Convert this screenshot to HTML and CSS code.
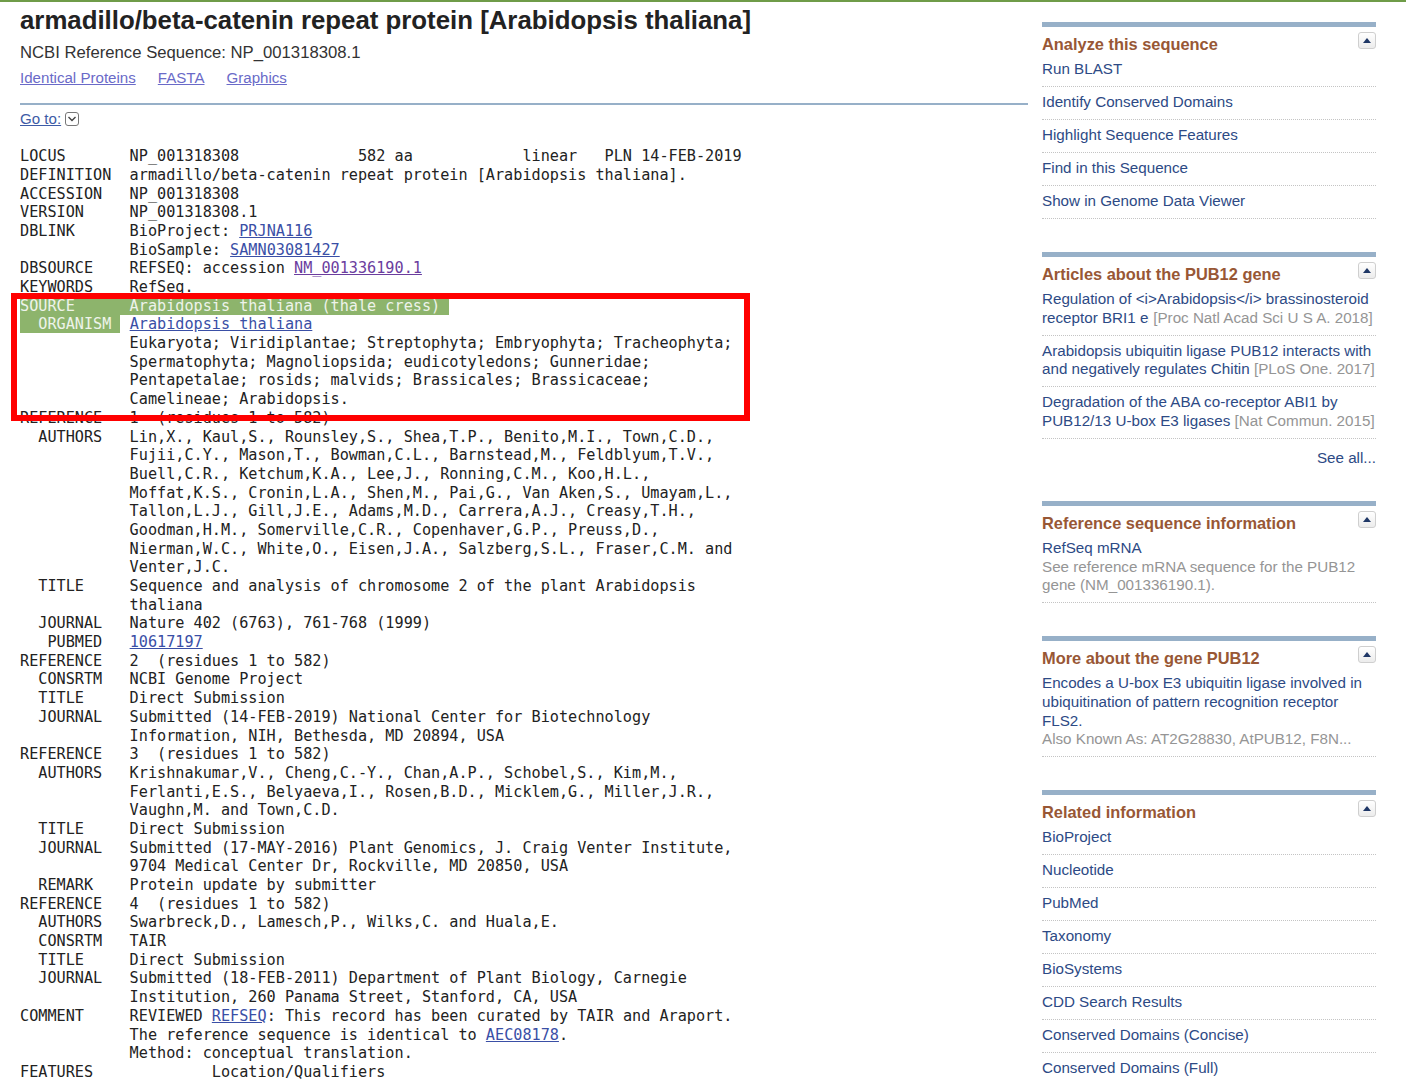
FILE: index.html
```html
<!DOCTYPE html>
<html lang="en">
<head>
<meta charset="utf-8">
<title>armadillo/beta-catenin repeat protein [Arabidopsis thaliana] - Protein - NCBI</title>
<link rel="stylesheet" href="styles.css">
</head>
<body>
<div class="topbar"></div>
<div class="page">
  <main class="content">
    <h1 class="title">armadillo/beta-catenin repeat protein [Arabidopsis thaliana]</h1>
    <p class="subtitle">NCBI Reference Sequence: NP_001318308.1</p>
    <nav class="actions">
      <a href="#">Identical Proteins</a>
      <a href="#">FASTA</a>
      <a href="#">Graphics</a>
    </nav>
    <div class="rule"></div>
    <div class="goto">
      <a href="#">Go to:</a>
      <span class="goto-btn"><svg width="10" height="8" viewBox="0 0 10 8"><path d="M1.5 2 L5 5.5 L8.5 2" fill="none" stroke="#444" stroke-width="1.4"/></svg></span>
    </div>
<pre class="genbank">LOCUS       NP_001318308             582 aa            linear   PLN 14-FEB-2019
DEFINITION  armadillo/beta-catenin repeat protein [Arabidopsis thaliana].
ACCESSION   NP_001318308
VERSION     NP_001318308.1
DBLINK      BioProject: <a href="#">PRJNA116</a>
            BioSample: <a href="#">SAMN03081427</a>
DBSOURCE    REFSEQ: accession <a href="#" class="visited">NM_001336190.1</a>
KEYWORDS    RefSeq.
<span class="hl">SOURCE      Arabidopsis thaliana (thale cress) </span>
<span class="hl">  ORGANISM </span> <a href="#">Arabidopsis thaliana</a>
            Eukaryota; Viridiplantae; Streptophyta; Embryophyta; Tracheophyta;
            Spermatophyta; Magnoliopsida; eudicotyledons; Gunneridae;
            Pentapetalae; rosids; malvids; Brassicales; Brassicaceae;
            Camelineae; Arabidopsis.
REFERENCE   1  (residues 1 to 582)
  AUTHORS   Lin,X., Kaul,S., Rounsley,S., Shea,T.P., Benito,M.I., Town,C.D.,
            Fujii,C.Y., Mason,T., Bowman,C.L., Barnstead,M., Feldblyum,T.V.,
            Buell,C.R., Ketchum,K.A., Lee,J., Ronning,C.M., Koo,H.L.,
            Moffat,K.S., Cronin,L.A., Shen,M., Pai,G., Van Aken,S., Umayam,L.,
            Tallon,L.J., Gill,J.E., Adams,M.D., Carrera,A.J., Creasy,T.H.,
            Goodman,H.M., Somerville,C.R., Copenhaver,G.P., Preuss,D.,
            Nierman,W.C., White,O., Eisen,J.A., Salzberg,S.L., Fraser,C.M. and
            Venter,J.C.
  TITLE     Sequence and analysis of chromosome 2 of the plant Arabidopsis
            thaliana
  JOURNAL   Nature 402 (6763), 761-768 (1999)
   PUBMED   <a href="#">10617197</a>
REFERENCE   2  (residues 1 to 582)
  CONSRTM   NCBI Genome Project
  TITLE     Direct Submission
  JOURNAL   Submitted (14-FEB-2019) National Center for Biotechnology
            Information, NIH, Bethesda, MD 20894, USA
REFERENCE   3  (residues 1 to 582)
  AUTHORS   Krishnakumar,V., Cheng,C.-Y., Chan,A.P., Schobel,S., Kim,M.,
            Ferlanti,E.S., Belyaeva,I., Rosen,B.D., Micklem,G., Miller,J.R.,
            Vaughn,M. and Town,C.D.
  TITLE     Direct Submission
  JOURNAL   Submitted (17-MAY-2016) Plant Genomics, J. Craig Venter Institute,
            9704 Medical Center Dr, Rockville, MD 20850, USA
  REMARK    Protein update by submitter
REFERENCE   4  (residues 1 to 582)
  AUTHORS   Swarbreck,D., Lamesch,P., Wilks,C. and Huala,E.
  CONSRTM   TAIR
  TITLE     Direct Submission
  JOURNAL   Submitted (18-FEB-2011) Department of Plant Biology, Carnegie
            Institution, 260 Panama Street, Stanford, CA, USA
COMMENT     REVIEWED <a href="#">REFSEQ</a>: This record has been curated by TAIR and Araport.
            The reference sequence is identical to <a href="#">AEC08178</a>.
            Method: conceptual translation.
FEATURES             Location/Qualifiers</pre>
  </main>

  <aside class="sidebar">
    <section class="portlet">
      <h3>Analyze this sequence</h3>
      <button class="toggle" type="button" aria-label="collapse"></button>
      <ul>
        <li><a href="#">Run BLAST</a></li>
        <li><a href="#">Identify Conserved Domains</a></li>
        <li><a href="#">Highlight Sequence Features</a></li>
        <li><a href="#">Find in this Sequence</a></li>
        <li><a href="#">Show in Genome Data Viewer</a></li>
      </ul>
    </section>

    <section class="portlet">
      <h3>Articles about the PUB12 gene</h3>
      <button class="toggle" type="button" aria-label="collapse"></button>
      <ul>
        <li><a href="#">Regulation of &lt;i&gt;Arabidopsis&lt;/i&gt; brassinosteroid <span class="clip">receptor BRI1 endocytosis</span></a> <span class="src nowrap">[Proc Natl Acad Sci U S A. 2018]</span></li>
        <li><a href="#">Arabidopsis ubiquitin ligase PUB12 interacts with and negatively regulates Chitin</a> <span class="src nowrap">[PLoS One. 2017]</span></li>
        <li><a href="#">Degradation of the ABA co-receptor ABI1 by PUB12/13 U-box E3 ligases</a> <span class="src nowrap">[Nat Commun. 2015]</span></li>
      </ul>
      <div class="seeall"><a href="#">See all...</a></div>
    </section>

    <section class="portlet">
      <h3>Reference sequence information</h3>
      <button class="toggle" type="button" aria-label="collapse"></button>
      <ul>
        <li><a href="#" class="blk">RefSeq mRNA</a><span class="src">See reference mRNA sequence for the PUB12 gene (NM_001336190.1).</span></li>
      </ul>
    </section>

    <section class="portlet">
      <h3>More about the gene PUB12</h3>
      <button class="toggle" type="button" aria-label="collapse"></button>
      <ul>
        <li><a href="#" class="blk">Encodes a U-box E3 ubiquitin ligase involved in ubiquitination of pattern recognition receptor FLS2.</a><span class="src blk">Also Known As: AT2G28830, AtPUB12, F8N...</span></li>
      </ul>
    </section>

    <section class="portlet">
      <h3>Related information</h3>
      <button class="toggle" type="button" aria-label="collapse"></button>
      <ul>
        <li><a href="#">BioProject</a></li>
        <li><a href="#">Nucleotide</a></li>
        <li><a href="#">PubMed</a></li>
        <li><a href="#">Taxonomy</a></li>
        <li><a href="#">BioSystems</a></li>
        <li><a href="#">CDD Search Results</a></li>
        <li><a href="#">Conserved Domains (Concise)</a></li>
        <li><a href="#">Conserved Domains (Full)</a></li>
      </ul>
    </section>
  </aside>
</div>
<div class="callout" aria-hidden="true"></div>
</body>
</html>
```
FILE: styles.css
```css
html, body {
  margin: 0;
  padding: 0;
  background: #fff;
}
body {
  font-family: "Liberation Sans", Arial, sans-serif;
  color: #222;
  overflow: hidden;
  height: 1079px;
  position: relative;
}
.topbar {
  height: 2px;
  background: #6f9c48;
}
.page {
  display: flex;
  gap: 14px;
  padding-left: 20px;
}
.content {
  width: 1008px;
  flex: none;
}
.title {
  margin: 2px 0 0;
  font-size: 25.8px;
  line-height: 32px;
  font-weight: bold;
  color: #222;
}
.subtitle {
  margin: 7px 0 0;
  font-size: 16.7px;
  line-height: 20px;
  color: #333;
}
.actions {
  margin-top: 5.6px;
  font-size: 15.1px;
  line-height: 18px;
  display: flex;
  gap: 22px;
}
.actions a {
  color: #6a6ac8;
  text-decoration: underline;
}
.rule {
  margin-top: 16px;
  height: 2px;
  background: #97b0c8;
}
.goto {
  margin-top: 5px;
  font-size: 15.1px;
  line-height: 18px;
  display: flex;
  align-items: center;
  gap: 4px;
}
.goto a {
  color: #3d5ba6;
}
.goto-btn {
  display: inline-flex;
  align-items: center;
  justify-content: center;
  width: 12px;
  height: 12px;
  border: 1px solid #777;
  border-radius: 3px;
  margin-top: 1px;
}
.genbank {
  margin: 19.6px 0 0;
  font-family: "DejaVu Sans Mono", monospace;
  font-size: 15.18px;
  line-height: 18.69px;
  color: #222;
}
.genbank a {
  color: #3a4fa6;
  text-decoration: underline;
}
.genbank a.visited {
  color: #6b3d9e;
}
.genbank .hl {
  background: #8db46c;
  color: #eef3ea;
}

/* sidebar */
.sidebar {
  width: 334px;
  flex: none;
  padding-top: 20px;
  font-size: 15.2px;
}
.portlet {
  position: relative;
  border-top: 5px solid #97b0c8;
  margin-bottom: 33px;
}
.portlet h3 {
  margin: 0;
  padding-top: 7px;
  font-size: 16.4px;
  line-height: 20px;
  color: #985735;
  font-weight: bold;
}
.toggle {
  position: absolute;
  right: 0;
  top: 5px;
  width: 18px;
  height: 17px;
  padding: 0;
  border: 1px solid #cfcfcf;
  border-radius: 3px;
  background: linear-gradient(#ffffff, #ececec);
}
.toggle::after {
  content: "";
  position: absolute;
  left: 4px;
  top: 5px;
  border-left: 4.5px solid transparent;
  border-right: 4.5px solid transparent;
  border-bottom: 5px solid #1f3766;
}
.portlet ul {
  list-style: none;
  margin: 0;
  padding: 0;
}
.portlet li {
  padding: 6px 0 7.3px;
  border-bottom: 1px dotted #c4c4c4;
  line-height: 18.7px;
}
.portlet a {
  color: #2d4a85;
  text-decoration: none;
}
.portlet .blk {
  display: block;
}
.src {
  color: #959595;
}
.nowrap {
  white-space: nowrap;
}
.clip {
  display: inline-block;
  width: 107px;
  overflow: hidden;
  white-space: nowrap;
  vertical-align: top;
}
.seeall {
  padding-top: 10px;
  line-height: 18.7px;
  text-align: right;
}

/* highlight annotation */
.callout {
  position: absolute;
  left: 11px;
  top: 293px;
  width: 739px;
  height: 128px;
  box-sizing: border-box;
  border: 6px solid #ff0000;
  pointer-events: none;
}
```
